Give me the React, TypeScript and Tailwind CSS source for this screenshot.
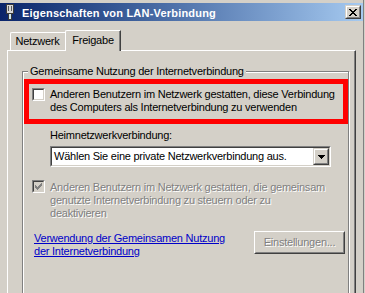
import React from 'react';

const ui = "font-['Liberation_Sans',Arial,sans-serif] text-[11px] leading-[13px] tracking-[-0.23px]";
const disabledText = 'text-[#808080] [text-shadow:1px_1px_0_#ffffff]';

function CheckMark({ color }: { color: string }) {
  return (
    <svg width="7" height="7" viewBox="0 0 7 7" shapeRendering="crispEdges" fill={color}>
      <rect x="6" y="0" width="1" height="1" />
      <rect x="5" y="1" width="2" height="1" />
      <rect x="0" y="2" width="1" height="1" />
      <rect x="4" y="2" width="3" height="1" />
      <rect x="0" y="3" width="2" height="1" />
      <rect x="3" y="3" width="3" height="1" />
      <rect x="0" y="4" width="5" height="1" />
      <rect x="1" y="5" width="3" height="1" />
      <rect x="2" y="6" width="1" height="1" />
    </svg>
  );
}

function Checkbox({ checked, disabled }: { checked?: boolean; disabled?: boolean }) {
  return (
    <div className="h-[13px] w-[13px] shrink-0 border border-t-[#808080] border-l-[#808080] border-b-white border-r-white">
      <div
        className={
          'flex h-full w-full items-center justify-center border border-t-[#404040] border-l-[#404040] border-b-[#d4d0c8] border-r-[#d4d0c8] ' +
          (disabled ? 'bg-[#d4d0c8]' : 'bg-white')
        }
      >
        {checked && <CheckMark color={disabled ? '#808080' : '#000000'} />}
      </div>
    </div>
  );
}

function LanIcon() {
  return (
    <svg width="10" height="16" viewBox="0 0 10 16" shapeRendering="crispEdges">
      <rect x="1.5" y="0.5" width="7" height="9" fill="#d8d8d8" stroke="#3a3a3a" />
      <rect x="3" y="2" width="1" height="5" fill="#5a5a5a" />
      <rect x="6" y="2" width="1" height="5" fill="#5a5a5a" />
      <rect x="3.5" y="9.5" width="3" height="6" fill="#cfe8f0" stroke="#3a3a3a" />
    </svg>
  );
}

function CloseGlyph() {
  return (
    <svg width="8" height="7" viewBox="0 0 8 7" shapeRendering="crispEdges" fill="#000">
      <rect x="0" y="0" width="2" height="1" />
      <rect x="6" y="0" width="2" height="1" />
      <rect x="1" y="1" width="2" height="1" />
      <rect x="5" y="1" width="2" height="1" />
      <rect x="2" y="2" width="4" height="1" />
      <rect x="3" y="3" width="2" height="1" />
      <rect x="2" y="4" width="4" height="1" />
      <rect x="1" y="5" width="2" height="1" />
      <rect x="5" y="5" width="2" height="1" />
      <rect x="0" y="6" width="2" height="1" />
      <rect x="6" y="6" width="2" height="1" />
    </svg>
  );
}

function TitleBar() {
  return (
    <div className="flex h-[18px] items-start bg-linear-to-r from-[#0a246a] to-[#a6caf0] pl-[5px] pr-[2px]">
      <div className="mt-[1px]">
        <LanIcon />
      </div>
      <span className="ml-[7px] mt-[4px] font-['Liberation_Sans',Arial,sans-serif] text-[11px] leading-[13px] font-bold tracking-[0.2px] whitespace-nowrap text-white">
        Eigenschaften von LAN-Verbindung
      </span>
      <div className="ml-auto mt-[2px] h-[14px] w-[16px] border border-t-[#d4d0c8] border-l-[#d4d0c8] border-b-[#404040] border-r-[#404040]">
        <div className="flex h-full w-full items-center justify-center border border-t-white border-l-white border-b-[#808080] border-r-[#808080] bg-[#d4d0c8]">
          <CloseGlyph />
        </div>
      </div>
    </div>
  );
}

function Tabs() {
  return (
    <div className="flex h-[29px] items-end pl-[3px]">
      <div className="flex h-[18px] w-[55px] items-center justify-center rounded-tl-[2px] border-t border-l border-white pr-[1px]">
        <span className={`${ui} whitespace-nowrap text-black`}>Netzwerk</span>
      </div>
      <div className="relative z-10 -mb-px flex h-[21px] w-[56px] items-start justify-center rounded-tl-[2px] border-t border-l border-r border-t-white border-l-white border-r-[#404040] bg-[#d4d0c8] pt-[3px] shadow-[inset_-1px_0_0_#808080]">
        <span className={`${ui} whitespace-nowrap text-black`}>Freigabe</span>
      </div>
    </div>
  );
}

function ComboBox() {
  return (
    <div className="ml-[27px] mt-[4px] h-[21px] w-[281px] border border-t-[#808080] border-l-[#808080] border-b-white border-r-white">
      <div className="flex h-full w-full items-center border border-t-[#404040] border-l-[#404040] border-b-[#d4d0c8] border-r-[#d4d0c8] bg-white">
        <span className={`${ui} ml-[2px] whitespace-nowrap text-black`}>
          Wählen Sie eine private Netzwerkverbindung aus.
        </span>
        <div className="ml-auto h-full w-[16px] border border-t-[#d4d0c8] border-l-[#d4d0c8] border-b-[#404040] border-r-[#404040]">
          <div className="flex h-full w-full items-center justify-center border border-t-white border-l-white border-b-[#808080] border-r-[#808080] bg-[#d4d0c8]">
            <svg width="7" height="4" viewBox="0 0 7 4" shapeRendering="crispEdges" fill="#000">
              <rect x="0" y="0" width="7" height="1" />
              <rect x="1" y="1" width="5" height="1" />
              <rect x="2" y="2" width="3" height="1" />
              <rect x="3" y="3" width="1" height="1" />
            </svg>
          </div>
        </div>
      </div>
    </div>
  );
}

function SharingGroup() {
  return (
    <fieldset className="ml-[14px] mt-[14px] h-[300px] w-[318px] border border-[#808080] shadow-[1px_1px_0_#ffffff,inset_1px_1px_0_#ffffff]">
      <legend className={`${ui} ml-[5px] bg-[#d4d0c8] px-[2px] whitespace-nowrap text-black`}>
        Gemeinsame Nutzung der Internetverbindung
      </legend>

      <div className="ml-[1px] mt-[1px] h-[45px] w-[324px] border-[5px] border-[#ff0000]">
        <div className="flex items-start gap-[5px] pl-[3px] pt-[4px]">
          <Checkbox />
          <p className={`${ui} whitespace-nowrap text-black`}>
            Anderen Benutzern im Netzwerk gestatten, diese Verbindung
            <br />
            des Computers als Internetverbindung zu verwenden
          </p>
        </div>
      </div>

      <p className={`${ui} ml-[27px] mt-[5px] whitespace-nowrap text-black`}>Heimnetzwerkverbindung:</p>
      <ComboBox />

      <div className="ml-[9px] mt-[13px] flex items-start gap-[5px]">
        <Checkbox checked disabled />
        <p className={`${ui} ${disabledText} mt-[1px] whitespace-nowrap`}>
          Anderen Benutzern im Netzwerk gestatten, die gemeinsam
          <br />
          genutzte Internetverbindung zu steuern oder zu
          <br />
          deaktivieren
        </p>
      </div>

      <div className="mt-[11px] flex items-start justify-between">
        <a className={`${ui} ml-[11px] mt-[1px] whitespace-nowrap text-[#0000c8] underline`} href="#">
          Verwendung der Gemeinsamen Nutzung
          <br />
          der Internetverbindung
        </a>
        <div className="mr-[3px] h-[23px] w-[91px] border border-t-white border-l-white border-b-[#404040] border-r-[#404040]">
          <div className="flex h-full w-full items-center justify-center border border-t-[#d4d0c8] border-l-[#d4d0c8] border-b-[#808080] border-r-[#808080]">
            <span className={`${ui} ${disabledText} whitespace-nowrap`}>Einstellungen...</span>
          </div>
        </div>
      </div>
    </fieldset>
  );
}

export default function App() {
  return (
    <div className="h-[293px] w-[365px] overflow-hidden bg-[#d4d0c8]">
      <div className="h-full w-[364px] border-r border-[#808080] pt-[3px]">
        <TitleBar />
        <div className="pl-[7px]">
          <Tabs />
          <div className="h-[260px] w-[349px] border-t border-l border-r border-t-white border-l-white border-r-[#404040] shadow-[inset_-1px_0_0_#808080]">
            <SharingGroup />
          </div>
        </div>
      </div>
    </div>
  );
}
